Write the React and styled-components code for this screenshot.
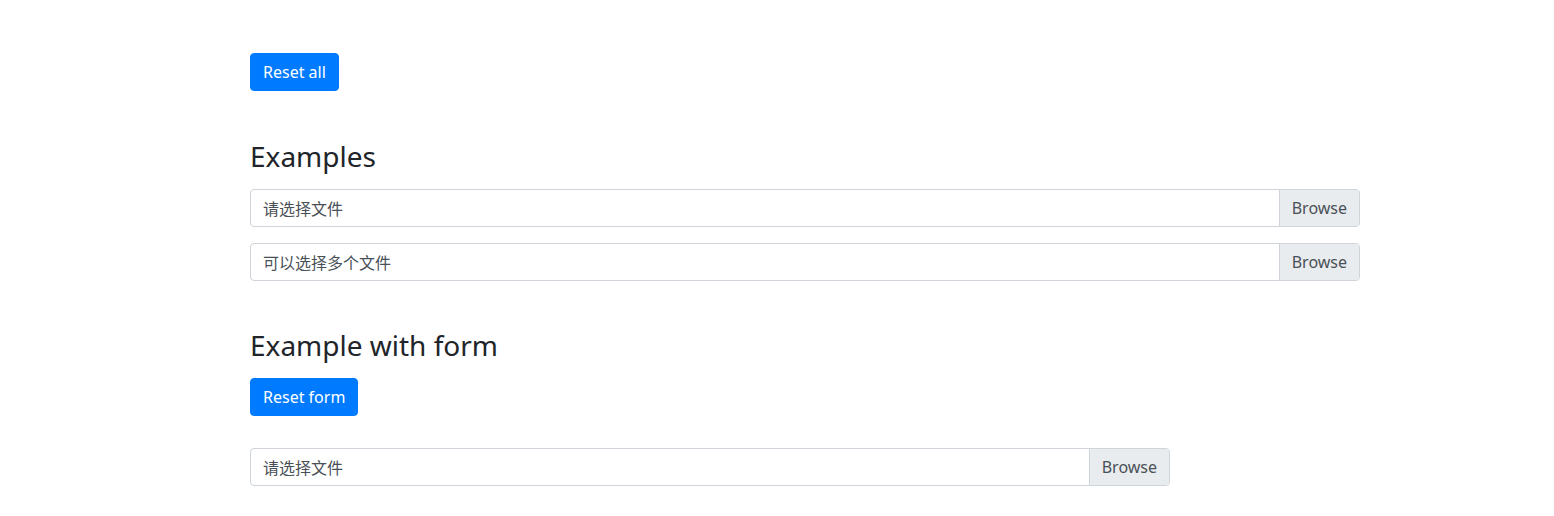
import styled, { createGlobalStyle } from 'styled-components';

const GlobalStyle = createGlobalStyle`
  body {
    margin: 0;
    background: #ffffff;
    font-family: "Noto Sans", "Noto Sans CJK SC", sans-serif;
    color: #212529;
  }
`;

const Page = styled.div`
  width: 1110px;
  padding: 53px 0 0 250px;
  display: flex;
  flex-direction: column;
  align-items: flex-start;
`;

const Button = styled.button`
  height: 38px;
  padding: 0 12px;
  border: 1px solid #007bff;
  border-radius: 4px;
  background-color: #007bff;
  color: #ffffff;
  font-family: "Noto Sans", sans-serif;
  font-size: 16px;
  cursor: pointer;
`;

const Heading = styled.h2`
  margin: ${(p) => p.$top}px 0 14px;
  font-size: 28px;
  font-weight: 400;
  line-height: 38px;
  color: #212529;
`;

const FileGroup = styled.label`
  width: ${(p) => p.$width}px;
  height: 38px;
  margin-top: ${(p) => p.$top || 0}px;
  box-sizing: border-box;
  display: flex;
  border: 1px solid #ced4da;
  border-radius: 4px;
  overflow: hidden;
  font-size: 16px;
  cursor: pointer;
`;

const FileLabel = styled.span`
  flex: 1;
  display: flex;
  align-items: center;
  padding-left: 12px;
  color: #495057;
  font-family: "Noto Sans", "Noto Sans CJK SC", sans-serif;
  font-size: 16px;
`;

const BrowseButton = styled.span`
  display: flex;
  align-items: center;
  padding: 0 12px;
  background-color: #e9ecef;
  border-left: 1px solid #ced4da;
  color: #495057;
`;

function FileInput({ label, width = 1110, top }) {
  return (
    <FileGroup $width={width} $top={top}>
      <FileLabel>{label}</FileLabel>
      <BrowseButton>Browse</BrowseButton>
    </FileGroup>
  );
}

function App() {
  return (
    <>
      <GlobalStyle />
      <Page>
        <Button>Reset all</Button>

        <Heading $top={46}>Examples</Heading>
        <FileInput label="请选择文件" />
        <FileInput label="可以选择多个文件" top={16} />

        <Heading $top={45}>Example with form</Heading>
        <Button>Reset form</Button>
        <FileInput label="请选择文件" width={920} top={32} />
      </Page>
    </>
  );
}

export default App;
